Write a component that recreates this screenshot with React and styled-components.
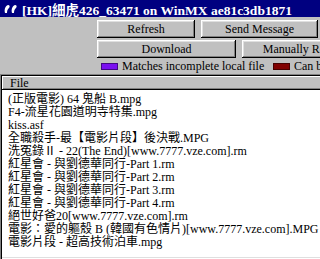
import React from "react";
import styled, { createGlobalStyle } from "styled-components";

const Global = createGlobalStyle`
  html, body { margin: 0; padding: 0; background: #c0c0c0; }
  * { box-sizing: border-box; }
`;

const SERIF = `"Liberation Serif", "Noto Sans CJK TC", serif`;

const Window = styled.div`
  width: 320px;
  height: 259px;
  background: #c0c0c0;
  overflow: hidden;
  display: flex;
  flex-direction: column;
  font-family: ${SERIF};
`;

const TitleBar = styled.div`
  height: 17px;
  flex: none;
  background: #000080;
  color: #fff;
  display: flex;
  align-items: center;
  gap: 3px;
  padding-left: 3px;
  font-weight: bold;
  font-size: 13.5px;
  white-space: nowrap;
`;

const Toolbar = styled.div`
  flex: none;
  display: flex;
  flex-direction: column;
  gap: 2px;
  padding: 3px 0 0 97px;
`;

const ButtonRow = styled.div`
  display: flex;
  gap: 6px;
  white-space: nowrap;
`;

const Button = styled.div`
  flex: none;
  width: ${(p) => p.$w}px;
  height: 18px;
  background: #c0c0c0;
  display: flex;
  align-items: center;
  justify-content: center;
  font-size: 12px;
  color: #000;
  box-shadow: inset -1px -1px #000, inset 1px 1px #fff,
    inset -2px -2px #808080, inset 2px 2px #dfdfdf;
`;

const Legend = styled.div`
  flex: none;
  height: 16px;
  display: flex;
  align-items: center;
  padding-left: 101px;
  white-space: nowrap;
  font-size: 12px;
`;

const LegendItem = styled.div`
  flex: none;
  width: ${(p) => (p.$w ? `${p.$w}px` : "auto")};
  display: flex;
  align-items: center;
  gap: 4px;
`;

const Swatch = styled.span`
  width: 17px;
  height: 7px;
  background: ${(p) => p.$c};
  border: 1px solid rgba(0, 0, 0, 0.45);
  flex: none;
`;

const ListBox = styled.div`
  flex: 1;
  width: 340px;
  background: #fff;
  padding: 2px;
  box-shadow: inset 1px 1px #808080, inset 2px 2px #000,
    inset -1px -1px #fff, inset -2px -2px #dfdfdf;
  display: flex;
  flex-direction: column;
`;

const Header = styled.div`
  height: 14px;
  flex: none;
  background: #c0c0c0;
  font-size: 12px;
  line-height: 14px;
  padding-left: 8px;
  box-shadow: inset -1px -1px #000, inset 1px 1px #fff,
    inset -2px -2px #808080;
`;

const Rows = styled.div`
  padding: 3px 0 0 6px;
  display: flex;
  flex-direction: column;
`;

const Row = styled.div`
  height: 13px;
  line-height: 13px;
  font-size: 12px;
  color: #000;
  white-space: nowrap;
`;

const files = [
  "(正版電影) 64 鬼船 B.mpg",
  "F4-流星花園道明寺特集.mpg",
  "kiss.asf",
  "全職殺手-最【電影片段】後決戰.MPG",
  "洗冤錄Ⅱ - 22(The End)[www.7777.vze.com].rm",
  "紅星會 - 與劉德華同行-Part 1.rm",
  "紅星會 - 與劉德華同行-Part 2.rm",
  "紅星會 - 與劉德華同行-Part 3.rm",
  "紅星會 - 與劉德華同行-Part 4.rm",
  "絕世好爸20[www.7777.vze.com].rm",
  "電影：愛的軀殼 B (韓國有色情片)[www.7777.vze.com].MPG",
  "電影片段 - 超高技術泊車.mpg",
];

const Icon = () => (
  <svg width="16" height="12" viewBox="0 0 16 12">
    <path d="M2 10 C1 7 2 3 5 2 C7 2 7 4 6 5 C5 6 4 7 4 10 Z" fill="#fff" />
    <path d="M9 10 C8 7 9 3 12 2 C14 2 14 4 13 5 C12 6 11 7 11 10 Z" fill="#fff" />
  </svg>
);

export default function App() {
  return (
    <>
      <Global />
      <Window>
        <TitleBar>
          <Icon />
          <span>[HK]細虎426_63471 on WinMX ae81c3db1871</span>
        </TitleBar>
        <Toolbar>
          <ButtonRow>
            <Button $w={98}>Refresh</Button>
            <Button $w={117}>Send Message</Button>
          </ButtonRow>
          <ButtonRow>
            <Button $w={139}>Download</Button>
            <Button $w={128}>Manually Refresh</Button>
          </ButtonRow>
        </Toolbar>
        <Legend>
          <LegendItem $w={172}>
            <Swatch $c="#7a10f0" />
            Matches incomplete local file
          </LegendItem>
          <LegendItem>
            <Swatch $c="#800000" />
            Can be resumed
          </LegendItem>
        </Legend>
        <ListBox>
          <Header>File</Header>
          <Rows>
            {files.map((f) => (
              <Row key={f}>{f}</Row>
            ))}
          </Rows>
        </ListBox>
      </Window>
    </>
  );
}
